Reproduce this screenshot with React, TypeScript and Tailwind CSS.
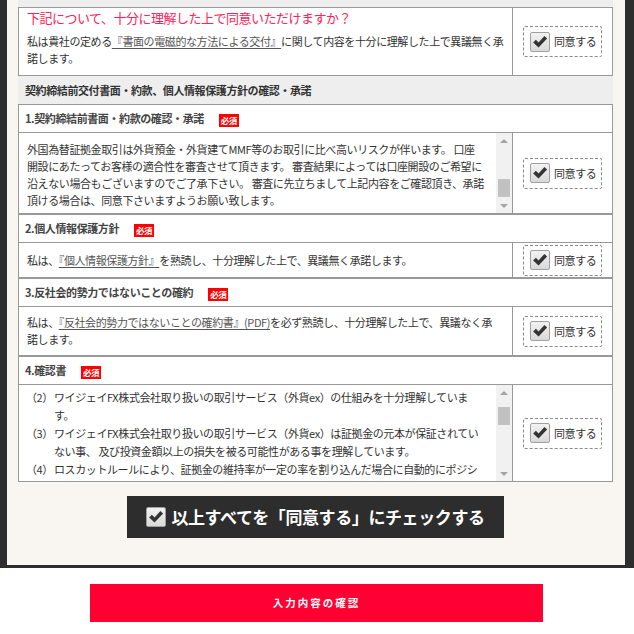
import type { ReactNode } from 'react'

function CheckBox({ size = 20 }: { size?: number }) {
  return (
    <span
      className="flex shrink-0 items-center justify-center rounded-[2px] border border-[#a0a0a0] bg-gradient-to-b from-[#f2f2f2] to-[#d9d9d9]"
      style={{ width: size, height: size }}
    >
      <svg viewBox="0 0 20 20" className="h-[18px] w-[18px]">
        <path d="M2.4 10.6 L5.4 7.6 L8.4 10.6 L14.9 3.2 L17.9 6.2 L8.4 16.2 Z" fill="#333" />
      </svg>
    </span>
  )
}

function Agree() {
  return (
    <div className="flex h-[31px] w-[79px] items-center gap-[4px] rounded-[2px] border border-dashed border-[#8a8a8a] pl-[6px]">
      <CheckBox />
      <span className="text-[11px] tracking-[-0.4px] text-[#333]">同意する</span>
    </div>
  )
}

function Badge() {
  return (
    <span className="ml-[15px] mt-[3px] flex h-[13px] w-[20px] items-center justify-center bg-[#ff0000] text-[8.5px] font-bold leading-none tracking-[-0.5px] text-white">
      必須
    </span>
  )
}

function Scrollbar({ thumbTop }: { thumbTop: number }) {
  return (
    <div className="flex w-[16px] shrink-0 flex-col bg-[#f1f1f1]">
      <div className="flex h-[15px] items-center justify-center">
        <span className="h-0 w-0 border-x-[4px] border-b-[4px] border-x-transparent border-b-[#a3a3a3]" />
      </div>
      <div className="flex-1">
        <div className="mx-[2px] h-[18px] bg-[#c1c1c1]" style={{ marginTop: thumbTop }} />
      </div>
      <div className="flex h-[15px] items-center justify-center">
        <span className="h-0 w-0 border-x-[4px] border-t-[4px] border-x-transparent border-t-[#a3a3a3]" />
      </div>
    </div>
  )
}

function Item({
  title,
  height,
  children,
}: {
  title: string
  height: number
  children: ReactNode
}) {
  return (
    <div className="border border-[#999] bg-white">
      <div className="flex h-[28px] items-center border-b border-[#999] pl-[6px]">
        <span className="text-[11px] font-bold tracking-[-0.4px] text-[#444]">{title}</span>
        <Badge />
      </div>
      <div className="flex" style={{ height }}>
        <div className="flex min-w-0 flex-1">{children}</div>
        <div className="flex w-[100px] shrink-0 items-center justify-center border-l border-[#999]">
          <Agree />
        </div>
      </div>
    </div>
  )
}

const link = 'text-[#555] underline decoration-[#555] underline-offset-2'

export default function App() {
  return (
    <div className="h-[634px] w-[634px] overflow-hidden bg-white font-['Noto_Sans_CJK_JP','Noto_Sans',sans-serif] text-[#333]">
      <div className="border-b-[3px] border-l-[7px] border-r-[9px] border-[#2d2d2d] bg-[#f9f5f1] pb-[27px] pl-[11px] pr-[12px]">
        <div className="h-[7px] bg-[#eee]" />

        {/* intro row */}
        <div className="flex border border-[#999] bg-white">
          <div className="h-[67px] flex-1 pl-[8px] pt-[1px] text-[11px] tracking-[-0.4px]">
            <p className="text-[13px] leading-[18px] tracking-[-0.5px] text-[#ff2255]">
              下記について、十分に理解した上で同意いただけますか？
            </p>
            <p className="mt-[6px] whitespace-nowrap leading-[17px]">
              私は貴社の定める<span className={link}>『書面の電磁的な方法による交付』</span>に関して内容を十分に理解した上で異議無く承
              <br />
              諾します。
            </p>
          </div>
          <div className="flex w-[100px] shrink-0 items-center justify-center border-l border-[#999]">
            <Agree />
          </div>
        </div>

        <div className="flex h-[28px] items-center bg-[#eee] pl-[7px] text-[11px] font-bold tracking-[-0.4px] text-[#333]">
          契約締結前交付書面・約款、個人情報保護方針の確認・承諾
        </div>

        <Item title="1.契約締結前書面・約款の確認・承諾" height={80}>
          <div className="flex-1 overflow-hidden whitespace-nowrap pl-[8px] pt-[8px] text-[11px] leading-[17px] tracking-[-0.4px]">
            <div>外国為替証拠金取引は外貨預金・外貨建てMMF等のお取引に比べ高いリスクが伴います。 口座</div>
            <div>開設にあたってお客様の適合性を審査させて頂きます。 審査結果によっては口座開設のご希望に</div>
            <div>沿えない場合もございますのでご了承下さい。 審査に先立ちまして上記内容をご確認頂き、承諾</div>
            <div>頂ける場合は、同意下さいますようお願い致します。</div>
          </div>
          <Scrollbar thumbTop={31} />
        </Item>

        <Item title="2.個人情報保護方針" height={34}>
          <div className="flex flex-1 items-center whitespace-nowrap pl-[8px] text-[11px] tracking-[-0.4px]">
            <span>
              私は、<span className={link}>『個人情報保護方針』</span>を熟読し、十分理解した上で、異議無く承諾します。
            </span>
          </div>
        </Item>

        <Item title="3.反社会的勢力ではないことの確約" height={48}>
          <div className="flex flex-1 items-center whitespace-nowrap pl-[8px] text-[11px] leading-[17px] tracking-[-0.4px]">
            <p>
              私は、<span className={link}>『反社会的勢力ではないことの確約書』</span>
              <span className={link}>(PDF)</span>を必ず熟読し、十分理解した上で、異議なく承
              <br />
              諾します。
            </p>
          </div>
        </Item>

        <Item title="4.確認書" height={96}>
          <div className="flex-1 overflow-hidden whitespace-nowrap pl-[7px] pt-[3px] text-[11px] leading-[18px] tracking-[-0.4px]">
            {[
              ['（2）', 'ワイジェイFX株式会社取り扱いの取引サービス（外貨ex）の仕組みを十分理解していま', 'す。'],
              ['（3）', 'ワイジェイFX株式会社取り扱いの取引サービス（外貨ex）は証拠金の元本が保証されてい', 'ない事、 及び投資金額以上の損失を被る可能性がある事を理解しています。'],
              ['（4）', 'ロスカットルールにより、証拠金の維持率が一定の率を割り込んだ場合に自動的にポジシ', ''],
            ].map(([num, a, b]) => (
              <div key={num} className="flex">
                <span className="w-[28px] shrink-0">{num}</span>
                <div>
                  <div>{a}</div>
                  {b && <div>{b}</div>}
                </div>
              </div>
            ))}
          </div>
          <Scrollbar thumbTop={7} />
        </Item>

        <button className="mx-auto mt-[14px] flex h-[42px] w-[377px] items-center justify-center gap-[5px] bg-[#2d2d2d]">
          <CheckBox size={20} />
          <span className="text-[17px] font-bold tracking-[-0.4px] text-white">
            以上すべてを「同意する」にチェックする
          </span>
        </button>
      </div>

      <button className="ml-[90px] mt-[16px] flex h-[38px] w-[453px] items-center justify-center bg-[#ff0033] text-[10.5px] font-bold tracking-[2px] text-white">
        入力内容の確認
      </button>
    </div>
  )
}
